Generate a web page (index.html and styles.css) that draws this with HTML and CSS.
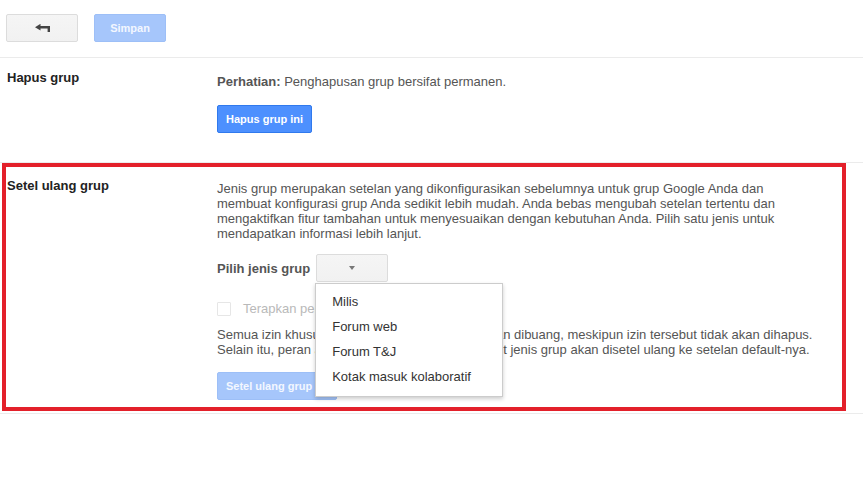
FILE: index.html
```html
<!DOCTYPE html>
<html lang="id">
<head>
<meta charset="utf-8">
<title>Setelan grup</title>
<link rel="stylesheet" href="styles.css">
</head>
<body>
<div class="page">
  <div class="toolbar">
    <button class="btn btn-default btn-back" type="button" aria-label="Kembali">
      <svg width="15" height="8" viewBox="0 0 15 8" aria-hidden="true"><path d="M0 3.2 L5.5 -0.2 L5.5 2 L15 2 L15 8 L12.6 8 L12.6 4.4 L5.5 4.4 L5.5 6.6 Z" fill="#444"/></svg>
    </button>
    <button class="btn btn-primary is-disabled btn-wide" type="button">Simpan</button>
  </div>

  <section class="row row-delete">
    <div class="row-label">Hapus grup</div>
    <div class="row-body">
      <p class="note"><strong>Perhatian:</strong> Penghapusan grup bersifat permanen.</p>
      <button class="btn btn-primary" type="button">Hapus grup ini</button>
    </div>
  </section>

  <section class="row row-reset">
    <div class="row-label">Setel ulang grup</div>
    <div class="row-body">
      <p class="desc">Jenis grup merupakan setelan yang dikonfigurasikan sebelumnya untuk grup Google Anda dan membuat konfigurasi grup Anda sedikit lebih mudah. Anda bebas mengubah setelan tertentu dan mengaktifkan fitur tambahan untuk menyesuaikan dengan kebutuhan Anda. Pilih satu jenis untuk mendapatkan informasi lebih lanjut.</p>

      <div class="select-row">
        <span class="select-label">Pilih jenis grup</span>
        <div class="select">
          <button class="select-btn" type="button"><span class="caret"></span></button>
          <ul class="menu">
            <li class="menu-item">Milis</li>
            <li class="menu-item">Forum web</li>
            <li class="menu-item">Forum T&amp;J</li>
            <li class="menu-item">Kotak masuk kolaboratif</li>
          </ul>
        </div>
      </div>

      <label class="check-row">
        <span class="checkbox"></span>
        <span class="check-text">Terapkan perubahan ini</span>
      </label>

      <p class="desc desc-wide">Semua izin khusus untuk jenis grup yang ada akan dibuang, meskipun izin tersebut tidak akan dihapus. Selain itu, peran anggota dan setelan yang berkait jenis grup akan disetel ulang ke setelan default-nya.</p>

      <button class="btn btn-primary is-disabled" type="button">Setel ulang grup ini</button>
    </div>
  </section>

  <div class="rule"></div>
</div>
</body>
</html>
```

FILE: styles.css
```css
html, body {
  margin: 0;
  padding: 0;
  background: #fff;
}

body {
  font-family: "Liberation Sans", Arial, sans-serif;
  font-size: 13px;
  color: #555;
}

.page {
  width: 863px;
}

.toolbar {
  display: flex;
  gap: 16px;
  padding: 14px 0 15px 6px;
  border-bottom: 1px solid #ebebeb;
}

.btn {
  box-sizing: border-box;
  height: 28px;
  padding: 0 8px;
  border-radius: 2px;
  font-family: "Liberation Sans", Arial, sans-serif;
  font-size: 11px;
  font-weight: bold;
  line-height: 26px;
  cursor: pointer;
  display: inline-flex;
  align-items: center;
  justify-content: center;
}

.btn-default {
  background: linear-gradient(#f5f5f5, #f1f1f1);
  border: 1px solid #dcdcdc;
  color: #444;
}

.btn-back {
  width: 72px;
}

.btn-wide {
  width: 72px;
}

.btn-primary {
  background: #4d90fe;
  border: 1px solid #3079ed;
  color: #fff;
}

.btn-primary.is-disabled {
  background: #a6c6fb;
  border-color: #9dbff7;
  color: #f3f7ff;
  cursor: default;
}

.row {
  display: grid;
}

.row-label {
  font-weight: bold;
  color: #222;
  line-height: 16px;
}

.row-delete {
  grid-template-columns: 217px 1fr;
  border-bottom: 1px solid #ebebeb;
}

.row-delete .row-label {
  padding: 12px 0 0 7px;
}

.row-delete .row-body {
  padding: 16px 0 29px 0;
}

.note {
  margin: 0 0 15px 0;
  line-height: 16px;
}

.row-reset {
  box-sizing: border-box;
  width: 844px;
  margin-left: 2px;
  border: 4px solid #e3202a;
  grid-template-columns: 211px 1fr;
}

.row-reset .row-label {
  padding: 11px 0 0 1px;
}

.row-reset .row-body {
  padding: 14px 0 7px 0;
  display: flex;
  flex-direction: column;
  align-items: flex-start;
}

.desc {
  margin: 0;
  max-width: 562px;
  line-height: 15px;
}

.desc-wide {
  max-width: none;
  margin-top: 11px;
  margin-bottom: 15px;
}

.select-row {
  display: flex;
  align-items: center;
  gap: 6px;
  margin-top: 13px;
}

.select-label {
  font-weight: bold;
  color: #555;
}

.select {
  position: relative;
}

.select-btn {
  box-sizing: border-box;
  width: 72px;
  height: 28px;
  padding: 0;
  background: linear-gradient(#f5f5f5, #f1f1f1);
  border: 1px solid #dcdcdc;
  border-radius: 2px;
  display: flex;
  align-items: center;
  justify-content: center;
}

.caret {
  width: 0;
  height: 0;
  border-left: 3.5px solid transparent;
  border-right: 3.5px solid transparent;
  border-top: 4px solid #777;
}

.menu {
  position: absolute;
  top: 29px;
  left: -1px;
  z-index: 5;
  box-sizing: border-box;
  width: 188px;
  margin: 0;
  padding: 5px 0 7px 0;
  list-style: none;
  background: #fff;
  border: 1px solid rgba(0, 0, 0, 0.2);
  box-shadow: 0 2px 4px rgba(0, 0, 0, 0.2);
}

.menu-item {
  height: 25px;
  line-height: 25px;
  padding-left: 16px;
  color: #333;
  white-space: nowrap;
}

.check-row {
  display: flex;
  align-items: center;
  gap: 12px;
  margin-top: 20px;
  height: 14px;
}

.checkbox {
  box-sizing: border-box;
  width: 14px;
  height: 14px;
  border: 1px solid #e6e6e6;
  border-radius: 1px;
  background: #fff;
}

.check-text {
  color: #b9b9b9;
  line-height: 14px;
}

.rule {
  margin-top: 2px;
  border-top: 1px solid #ebebeb;
}
```
